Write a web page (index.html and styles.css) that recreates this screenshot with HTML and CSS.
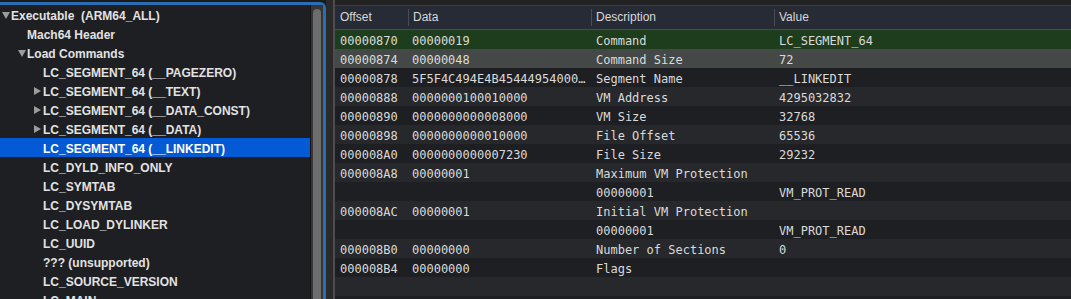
FILE: index.html
```html
<!DOCTYPE html>
<html lang="en">
<head>
  <meta charset="UTF-8">
  <title>MachOView - LC_SEGMENT_64 (__LINKEDIT)</title>
  <link rel="stylesheet" href="styles.css">
</head>
<body>
  <div class="sidebar">
    <div class="outline">
      <div class="tree">
        <div class="node lvl0"><span class="twisty open"></span>Executable  (ARM64_ALL)</div>
        <div class="node lvl1"><span class="twisty"></span>Mach64 Header</div>
        <div class="node lvl1"><span class="twisty open"></span>Load Commands</div>
        <div class="node lvl2"><span class="twisty"></span>LC_SEGMENT_64 (__PAGEZERO)</div>
        <div class="node lvl2"><span class="twisty closed"></span>LC_SEGMENT_64 (__TEXT)</div>
        <div class="node lvl2"><span class="twisty closed"></span>LC_SEGMENT_64 (__DATA_CONST)</div>
        <div class="node lvl2"><span class="twisty closed"></span>LC_SEGMENT_64 (__DATA)</div>
        <div class="node lvl2 selected"><span class="twisty"></span>LC_SEGMENT_64 (__LINKEDIT)</div>
        <div class="node lvl2"><span class="twisty"></span>LC_DYLD_INFO_ONLY</div>
        <div class="node lvl2"><span class="twisty"></span>LC_SYMTAB</div>
        <div class="node lvl2"><span class="twisty"></span>LC_DYSYMTAB</div>
        <div class="node lvl2"><span class="twisty"></span>LC_LOAD_DYLINKER</div>
        <div class="node lvl2"><span class="twisty"></span>LC_UUID</div>
        <div class="node lvl2"><span class="twisty"></span>??? (unsupported)</div>
        <div class="node lvl2"><span class="twisty"></span>LC_SOURCE_VERSION</div>
        <div class="node lvl2"><span class="twisty"></span>LC_MAIN</div>
      </div>
      <div class="scroller">
        <div class="thumb"></div>
      </div>
    </div>
  </div>

  <div class="split"></div>

  <div class="detail">
    <div class="table">
      <div class="thead">
        <div class="th">Offset</div>
        <div class="th">Data</div>
        <div class="th">Description</div>
        <div class="th">Value</div>
      </div>

      <div class="tr marked">
        <div class="td">00000870</div><div class="td">00000019</div><div class="td">Command</div><div class="td">LC_SEGMENT_64</div>
      </div>
      <div class="tr selected">
        <div class="td">00000874</div><div class="td">00000048</div><div class="td">Command Size</div><div class="td">72</div>
      </div>
      <div class="tr">
        <div class="td">00000878</div><div class="td">5F5F4C494E4B45444954000…</div><div class="td">Segment Name</div><div class="td">__LINKEDIT</div>
      </div>
      <div class="tr">
        <div class="td">00000888</div><div class="td">0000000100010000</div><div class="td">VM Address</div><div class="td">4295032832</div>
      </div>
      <div class="tr">
        <div class="td">00000890</div><div class="td">0000000000008000</div><div class="td">VM Size</div><div class="td">32768</div>
      </div>
      <div class="tr">
        <div class="td">00000898</div><div class="td">0000000000010000</div><div class="td">File Offset</div><div class="td">65536</div>
      </div>
      <div class="tr">
        <div class="td">000008A0</div><div class="td">0000000000007230</div><div class="td">File Size</div><div class="td">29232</div>
      </div>
      <div class="tr">
        <div class="td">000008A8</div><div class="td">00000001</div><div class="td">Maximum VM Protection</div><div class="td"></div>
      </div>
      <div class="tr">
        <div class="td"></div><div class="td"></div><div class="td">00000001</div><div class="td">VM_PROT_READ</div>
      </div>
      <div class="tr">
        <div class="td">000008AC</div><div class="td">00000001</div><div class="td">Initial VM Protection</div><div class="td"></div>
      </div>
      <div class="tr">
        <div class="td"></div><div class="td"></div><div class="td">00000001</div><div class="td">VM_PROT_READ</div>
      </div>
      <div class="tr">
        <div class="td">000008B0</div><div class="td">00000000</div><div class="td">Number of Sections</div><div class="td">0</div>
      </div>
      <div class="tr">
        <div class="td">000008B4</div><div class="td">00000000</div><div class="td">Flags</div><div class="td"></div>
      </div>
      <div class="tr"></div>
      <div class="tr"></div>
    </div>
  </div>
</body>
</html>
```

FILE: styles.css
```css
* {
  margin: 0;
  padding: 0;
  box-sizing: border-box;
}

body {
  width: 1071px;
  height: 299px;
  overflow: hidden;
  display: flex;
  background: #1b1b1b;
  color: #dedede;
  font-family: "Liberation Sans", Arial, sans-serif;
  font-size: 12px;
}

/* left outline view */

.sidebar {
  width: 326px;
  flex: none;
  padding-top: 2px;
}

.outline {
  height: 100%;
  display: flex;
  background: #1e1f23;
  border-top: 3px solid #2b6db4;
  border-right: 3px solid #2b6db4;
  border-top-right-radius: 6px;
}

.tree {
  flex: 1;
  overflow: hidden;
}

.node {
  height: 19px;
  display: flex;
  align-items: center;
  padding-top: 3px;
  font-weight: bold;
  white-space: pre;
  color: #e2e2e2;
}

.node.lvl1 {
  padding-left: 16px;
}

.node.lvl2 {
  padding-left: 32px;
}

.node.selected {
  background: #0459d4;
  color: #fff;
}

.twisty {
  width: 11px;
  flex: none;
  display: flex;
  align-items: center;
  padding-left: 2px;
  margin-top: -2px;
}

.twisty.open::before {
  content: "";
  border-left: 4px solid transparent;
  border-right: 4px solid transparent;
  border-top: 7px solid #9c9c9c;
}

.twisty.closed::before {
  content: "";
  border-top: 4px solid transparent;
  border-bottom: 4px solid transparent;
  border-left: 7px solid #9c9c9c;
}

.scroller {
  width: 13px;
  flex: none;
  background: #363636;
  border-left: 1px solid #141414;
  padding: 4px 2px 0 2px;
}

.thumb {
  height: 320px;
  background: #6d6d6d;
  border-radius: 4px;
}

.split {
  width: 7px;
  flex: none;
  background: #2a2a2a;
}

/* right detail table */

.detail {
  flex: 1;
  border-left: 2px solid #4d4d4d;
  background: #232323;
  padding-top: 5px;
}

.table {
  height: 100%;
  background: #1e1f22;
}

.thead,
.tr {
  display: grid;
  grid-template-columns: 73px 183px 183px 1fr;
}

.thead {
  height: 25px;
  background: #272b35;
  border-top: 1px solid #3b3b3b;
  border-bottom: 1px solid #4b4b4b;
}

.th {
  margin-top: 3px;
  height: 17px;
  line-height: 17px;
  padding-left: 5px;
  color: #d8d8d8;
}

.th + .th {
  border-left: 1px solid #4a4d57;
  padding-left: 4px;
}

.tr {
  height: 19px;
  font-family: "DejaVu Sans Mono", "Liberation Mono", monospace;
  font-size: 12px;
  color: #dadada;
}

.tr:nth-child(odd) {
  background: #26282b;
}

.tr.marked {
  background: #1e3d1c;
}

.tr.selected {
  background: #444947;
}

.td {
  padding: 3px 5px 0 5px;
  line-height: 16px;
  white-space: nowrap;
  overflow: hidden;
  text-overflow: ellipsis;
}

.td:nth-child(2) {
  padding-left: 4px;
}
```
